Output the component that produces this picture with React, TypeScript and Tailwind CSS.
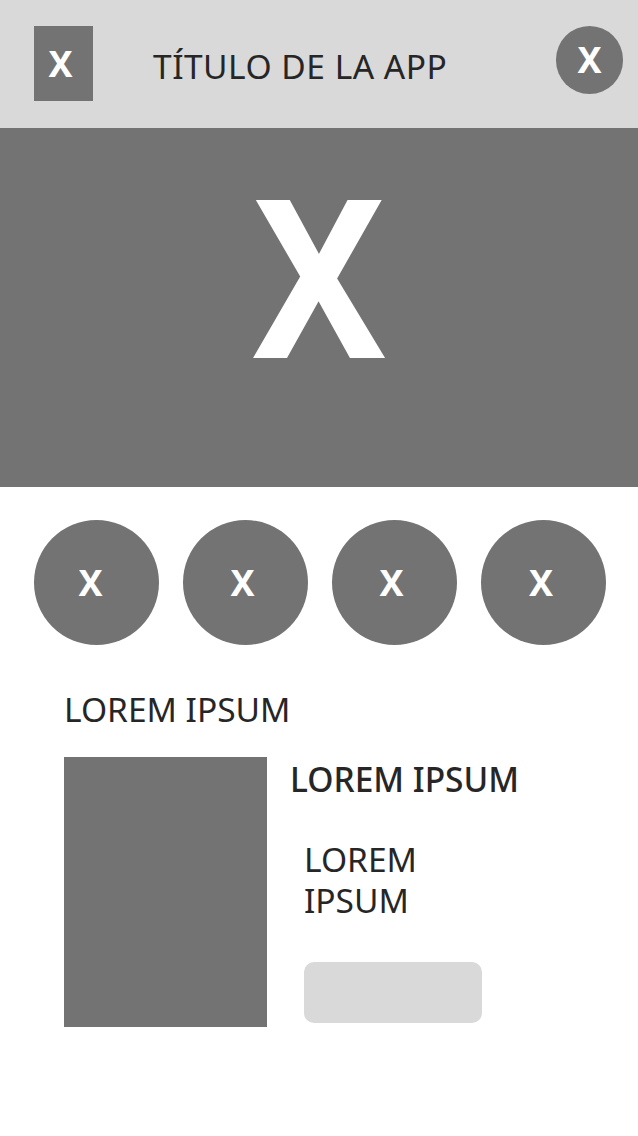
const font = { fontFamily: '"Noto Sans", "Open Sans", sans-serif' };

function BigCircle({ shift }: { shift: string }) {
  return (
    <div className={`flex h-[125px] w-[125px] items-center justify-center rounded-full bg-[#737373] ${shift}`}>
      <span className="text-[36px] font-bold leading-none text-white">X</span>
    </div>
  );
}

export default function App() {
  return (
    <div className="min-h-[1136px] w-[638px] bg-white text-[#262626]" style={font}>
      {/* header */}
      <header className="flex h-[128px] items-start bg-[#d9d9d9] pl-[34px] pr-[15px] pt-[26px]">
        <div className="flex h-[75px] w-[59px] items-center justify-center bg-[#737373] pr-[6px]">
          <span className="text-[36px] font-bold leading-none text-white">X</span>
        </div>
        <h1 className="ml-[60px] mt-[20px] flex-1 text-[33.5px] leading-[40px] tracking-[0.015em]">
          TÍTULO DE LA APP
        </h1>
        <div className="flex h-[68px] w-[67px] items-center justify-center rounded-full bg-[#737373]">
          <span className="text-[36px] font-bold leading-none text-white">X</span>
        </div>
      </header>

      {/* hero */}
      <section className="flex h-[359px] justify-center bg-[#737373] pt-[34px]">
        <span className="inline-block scale-x-90 text-[221px] font-bold leading-none text-white">X</span>
      </section>

      {/* circles */}
      <div className="mt-[33px] flex justify-between pl-[34px] pr-[32px]">
        <BigCircle shift="pr-[12px]" />
        <BigCircle shift="pr-[6px]" />
        <BigCircle shift="pr-[6px]" />
        <BigCircle shift="pr-[5px]" />
      </div>

      {/* content */}
      <div className="px-[64px] pt-[44px]">
        <p className="text-[33.5px] leading-[40px]">LOREM IPSUM</p>
        <div className="mt-[28px] flex">
          <div className="h-[270px] w-[203px] bg-[#737373]" />
          <div className="ml-[23px] flex flex-col">
            <p className="mt-[2px] text-[33.5px] font-medium leading-[40px]">LOREM IPSUM</p>
            <div className="ml-[14px] mt-[40px] text-[33.5px]">
              <p className="leading-[41px]">LOREM</p>
              <p className="leading-[41px]">IPSUM</p>
            </div>
            <div className="ml-[14px] mt-[41px] h-[61px] w-[178px] rounded-[10px] bg-[#d9d9d9]" />
          </div>
        </div>
      </div>
    </div>
  );
}
